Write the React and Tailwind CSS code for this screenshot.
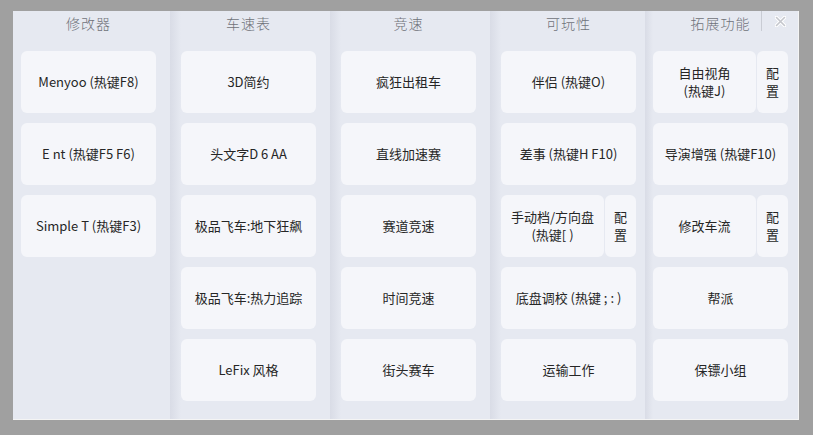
import React from "react";

const font = { fontFamily: '"Noto Sans CJK SC", "Noto Sans", sans-serif' };

const columns = [
  {
    title: "修改器",
    sep: "none",
    pad: "pl-[8px] pr-[14px]",
    items: [{ label: "Menyoo (热键F8)" }, { label: "E nt (热键F5 F6)" }, { label: "Simple T (热键F3)" }],
  },
  {
    title: "车速表",
    sep: "w-[11px]",
    pad: "pr-[14px]",
    items: [
      { label: "3D简约" },
      { label: "头文字D 6 AA" },
      { label: "极品飞车:地下狂飙" },
      { label: "极品飞车:热力追踪" },
      { label: "LeFix 风格" },
    ],
  },
  {
    title: "竞速",
    sep: "w-[11px]",
    pad: "pr-[14px]",
    items: [
      { label: "疯狂出租车" },
      { label: "直线加速赛" },
      { label: "赛道竞速" },
      { label: "时间竞速" },
      { label: "街头赛车" },
    ],
  },
  {
    title: "可玩性",
    sep: "w-[11px]",
    pad: "pr-[9px]",
    items: [
      { label: "伴侣 (热键O)" },
      { label: "差事 (热键H F10)" },
      { label: ["手动档/方向盘", "(热键[ )"], config: true },
      { label: "底盘调校 (热键 ; : )" },
      { label: "运输工作" },
    ],
  },
  {
    title: "拓展功能",
    sep: "w-[8px]",
    pad: "pr-[11px]",
    items: [
      { label: ["自由视角", "(热键J)"], config: true },
      { label: "导演增强 (热键F10)" },
      { label: "修改车流", config: true },
      { label: "帮派" },
      { label: "保镖小组" },
    ],
  },
];

function Label({ label }) {
  if (Array.isArray(label)) {
    return (
      <div className="flex flex-col items-center leading-[18px]">
        {label.map((l) => (
          <span key={l}>{l}</span>
        ))}
      </div>
    );
  }
  return <span>{label}</span>;
}

function Card({ item }) {
  if (item.config) {
    return (
      <div className="flex h-[62px] gap-px">
        <div className="flex-1 bg-[#f5f6fa] rounded-[6px] flex items-center justify-center text-[13px] text-[#262626]">
          <Label label={item.label} />
        </div>
        <div className="w-[31px] bg-[#f5f6fa] rounded-[6px] flex flex-col items-center justify-center text-[13px] leading-[18px] text-[#262626]">
          <span>配</span>
          <span>置</span>
        </div>
      </div>
    );
  }
  return (
    <div className="h-[62px] bg-[#f5f6fa] rounded-[6px] flex items-center justify-center text-[13px] text-[#262626]">
      <Label label={item.label} />
    </div>
  );
}

function Column({ col }) {
  return (
    <div className="flex h-full">
      {col.sep !== "none" && (
        <div className={`${col.sep} h-full bg-gradient-to-r from-[#d9dce6] to-[#e6e9f1]`} />
      )}
      <div className={`${col.pad} flex flex-col`}>
        <div className="h-[40px] w-[135px] flex justify-center pt-[2px] text-[14px] leading-[20px] text-[#6f7279] font-light tracking-[1px]">
          {col.title}
        </div>
        <div className="w-[135px] flex flex-col gap-[10px]">
          {col.items.map((it, i) => (
            <Card key={i} item={it} />
          ))}
        </div>
      </div>
    </div>
  );
}

export default function App() {
  return (
    <div className="w-[813px] h-[435px] bg-[#a0a0a0] pt-[11px] pl-[13px]" style={font}>
      <div className="relative w-[786px] h-[409px] bg-[#e6e9f1] flex border-r border-b border-[#f4f4f4]">
        {columns.map((c) => (
          <Column key={c.title} col={c} />
        ))}
        <div className="absolute top-0 right-0 w-[37px] h-[20px] border-l border-[#c9ccd4] flex items-center justify-center">
          <svg width="11" height="11" viewBox="0 0 11 11">
            <path d="M1.5 1.5 L9.5 9.5 M9.5 1.5 L1.5 9.5" stroke="#ffffff" strokeWidth="3.5" strokeLinecap="round" />
            <path d="M1.5 1.5 L9.5 9.5 M9.5 1.5 L1.5 9.5" stroke="#c4c6cc" strokeWidth="1.6" strokeLinecap="round" />
          </svg>
        </div>
      </div>
    </div>
  );
}
